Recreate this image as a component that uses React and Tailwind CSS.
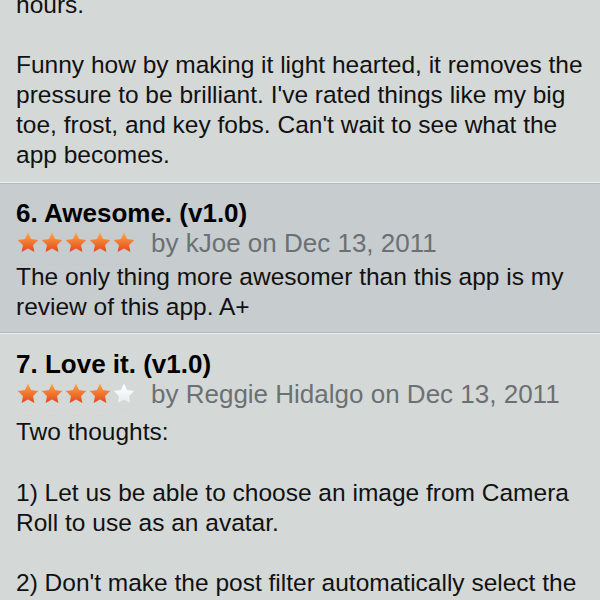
import React from 'react';

const STAR = 'M12 1.5l3.1 6.6 7.2.9-5.3 5 1.4 7.1L12 17.6l-6.4 3.5 1.4-7.1-5.3-5 7.2-.9z';

const Star = ({ filled, id }) => (
  <svg width="24" height="34" viewBox="0 0 24 34" className="block">
    <defs>
      <linearGradient id={`g${id}`} x1="0" y1="0" x2="0" y2="1">
        <stop offset="0" stopColor={filled ? '#ffa748' : '#ffffff'} />
        <stop offset="1" stopColor={filled ? '#e2481a' : '#e8ecee'} />
      </linearGradient>
      <linearGradient id={`r${id}`} x1="0" y1="0" x2="0" y2="1">
        <stop offset="0" stopColor={filled ? '#e86a3a' : '#ffffff'} stopOpacity="0.45" />
        <stop offset="0.5" stopColor={filled ? '#e86a3a' : '#ffffff'} stopOpacity="0" />
      </linearGradient>
    </defs>
    <path d={STAR} fill={`url(#g${id})`} />
    <g transform="translate(0 44) scale(1 -1)">
      <path d={STAR} fill={`url(#r${id})`} />
    </g>
  </svg>
);

const Stars = ({ count, id }) => (
  <div className="flex h-[26px] items-start overflow-visible pt-[1px]">
    {[0, 1, 2, 3, 4].map((i) => (
      <div key={i} className="h-[26px] overflow-visible">
        <Star filled={i < count} id={`${id}-${i}`} />
      </div>
    ))}
  </div>
);

const Review = ({ title, stars, author, date, children, dark, id, top, bodyTop }) => (
  <div className={`${dark ? 'bg-[#c7cccf]' : 'bg-[#d4d9d8]'} px-4 ${top} pb-[10px]`}>
    <div className="text-[26px] font-bold leading-[30px] text-black">{title}</div>
    <div className="flex items-center gap-[15px] h-[30px]">
      <Stars count={stars} id={id} />
      <span className="text-[26px] leading-[30px] text-[#6c7073]">
        by {author} on {date}
      </span>
    </div>
    <div className={`${bodyTop} text-[24.5px] leading-[30px] text-[#111]`}>{children}</div>
  </div>
);

export default function App() {
  return (
    <div
      className="h-[600px] w-[600px] overflow-hidden bg-[#d4d9d8]"
      style={{ fontFamily: '"Liberation Sans", Arial, sans-serif' }}
    >
      <div className="-mt-[10px] px-4 pb-[12px] text-[24.5px] leading-[30px] text-[#111]">
        <p>hours.</p>
        <p className="mt-[30px]">
          Funny how by making it light hearted, it removes the pressure to be brilliant. I've rated things like my big
          toe, frost, and key fobs. Can't wait to see what the app becomes.
        </p>
      </div>
      <div className="h-[1px] bg-[#e9eded]" />
      <div className="h-[1px] bg-[#b5babd]" />
      <Review
        id="a"
        dark
        top="pt-[14px]"
        bodyTop="mt-[4px]"
        title="6. Awesome. (v1.0)"
        stars={5}
        author="kJoe"
        date="Dec 13, 2011"
      >
        The only thing more awesomer than this app is my review of this app. A+
      </Review>
      <div className="h-[1px] bg-[#b3b8bb]" />
      <div className="h-[1px] bg-[#eceff0]" />
      <Review
        id="b"
        top="pt-[15px]"
        bodyTop="mt-[8px]"
        title="7. Love it. (v1.0)"
        stars={4}
        author="Reggie Hidalgo"
        date="Dec 13, 2011"
      >
        <p>Two thoughts:</p>
        <p className="mt-[31px]">1) Let us be able to choose an image from Camera Roll to use as an avatar.</p>
        <p className="mt-[30px]">2) Don't make the post filter automatically select the</p>
      </Review>
    </div>
  );
}
